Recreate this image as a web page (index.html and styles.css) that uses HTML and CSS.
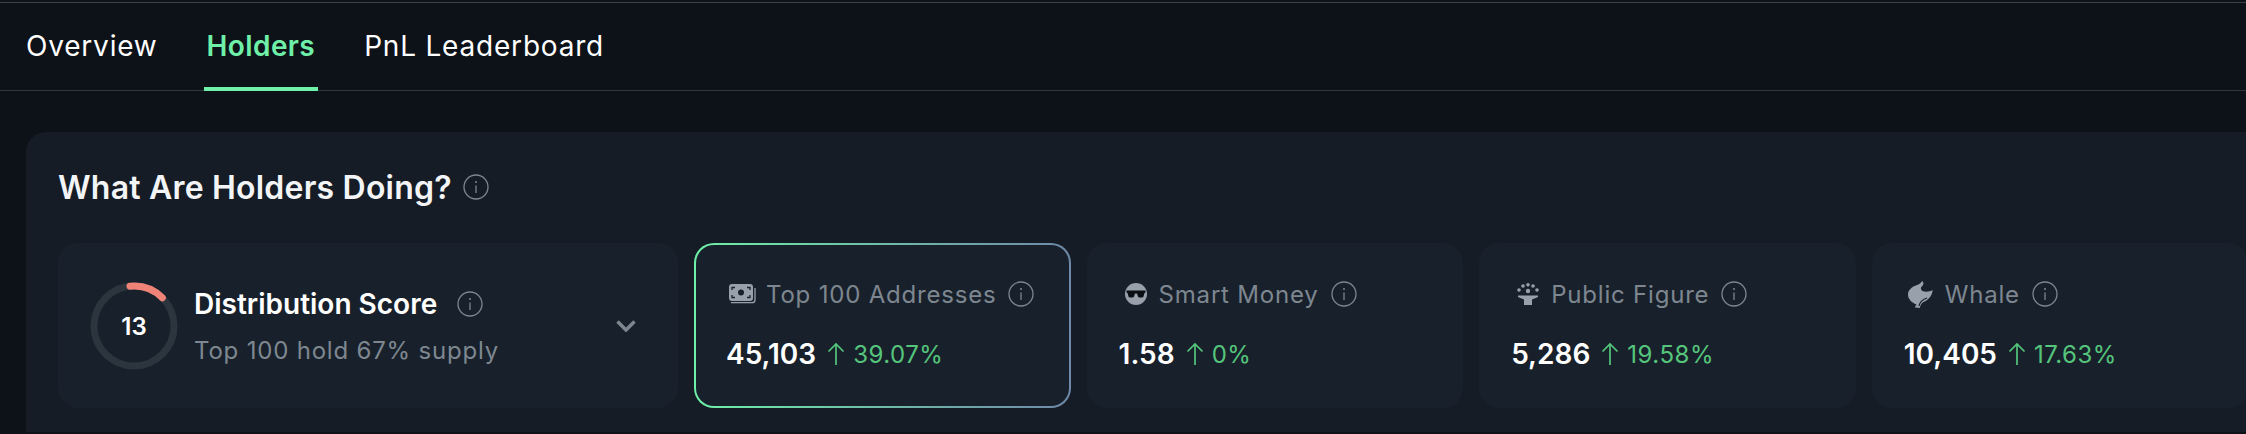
FILE: index.html
```html
<!DOCTYPE html>
<html lang="en">
<head>
  <meta charset="UTF-8">
  <title>Holders</title>
  <link rel="stylesheet" href="styles.css">
</head>
<body>
  <svg class="svg-defs" width="0" height="0">
    <symbol id="info" viewBox="0 0 26 26">
      <circle cx="13" cy="13" r="12" fill="none" stroke="currentColor" stroke-width="1.3"/>
      <path d="M13 11.5v7.5" stroke="currentColor" stroke-width="1.3" fill="none"/>
      <circle cx="13" cy="8" r="1" fill="currentColor"/>
    </symbol>
    <symbol id="up" viewBox="0 0 18 24">
      <path d="M9 23V2M1.5 9.5 9 2l7.500 7.500" fill="none" stroke="currentColor" stroke-width="1.7"/>
    </symbol>
  </svg>

  <nav class="tabs">
    <a class="tab">Overview</a>
    <a class="tab active">Holders</a>
    <a class="tab">PnL Leaderboard</a>
  </nav>

  <main class="panel">
    <h2 class="panel-title">What Are Holders Doing? <svg class="info"><use href="#info"/></svg></h2>

    <div class="cards">
      <div class="card score-card">
        <svg class="ring" viewBox="0 0 88 88">
          <circle cx="44" cy="44" r="40" fill="none" stroke="#2c343e" stroke-width="7"/>
          <path d="M40 4.2A40 40 0 0 1 72.3 15.7" fill="none" stroke="#f08378" stroke-width="7" stroke-linecap="round"/>
          <text x="44" y="53" text-anchor="middle" class="ring-num">13</text>
        </svg>
        <div class="score-text">
          <div class="score-title">Distribution Score <svg class="info"><use href="#info"/></svg></div>
          <div class="score-sub">Top 100 hold 67% supply</div>
        </div>
        <svg class="chevron" viewBox="0 0 20 12"><path d="M1.5 1.5 10 10l8.5-8.5" fill="none" stroke="currentColor" stroke-width="3.5"/></svg>
      </div>

      <div class="card stat selected">
        <div class="stat-head">
          <svg class="kind kind-money" viewBox="0 0 27 20">
            <path d="M3 0h18a3 3 0 0 1 3 3v11a3 3 0 0 1-3 3H3a3 3 0 0 1-3-3V3a3 3 0 0 1 3-3Z" fill="#98a1ab"/>
            <circle cx="12" cy="8.500" r="3" fill="#18212b"/>
            <path d="M3 6V3.500h3M21 6V3.500h-3M3 11v2.500h3M21 11v2.500h-3" fill="none" stroke="#18212b" stroke-width="1.300"/>
            <path d="M2 18.700h21a3 3 0 0 0 3-3V4" fill="none" stroke="#98a1ab" stroke-width="1.300"/>
          </svg>
          <span>Top 100 Addresses</span>
          <svg class="info"><use href="#info"/></svg>
        </div>
        <div class="stat-row">
          <b>45,103</b>
          <svg class="up"><use href="#up"/></svg>
          <span class="pct">39.07%</span>
        </div>
      </div>

      <div class="card stat">
        <div class="stat-head">
          <svg class="kind kind-smart" viewBox="0 0 22 22">
            <circle cx="11" cy="11" r="11" fill="#98a1ab"/>
            <path d="M1.500 7.500h19v2l-1 .5-1 3.500a1.500 1.500 0 0 1-1.500 1h-2.500a1.500 1.500 0 0 1-1.500-1L12 10.500h-2l-1 3a1.500 1.500 0 0 1-1.500 1H5a1.500 1.500 0 0 1-1.500-1L2.500 10l-1-.5Z" fill="#0b0f14"/>
          </svg>
          <span>Smart Money</span>
          <svg class="info"><use href="#info"/></svg>
        </div>
        <div class="stat-row">
          <b>1.58</b>
          <svg class="up"><use href="#up"/></svg>
          <span class="pct">0%</span>
        </div>
      </div>

      <div class="card stat">
        <div class="stat-head">
          <svg class="kind kind-figure" viewBox="0 0 22 22">
            <g fill="#98a1ab">
              <circle cx="11" cy="1.800" r="1.800"/>
              <circle cx="6" cy="3" r="1.800"/>
              <circle cx="16" cy="3" r="1.800"/>
              <circle cx="2" cy="7" r="1.800"/>
              <circle cx="20" cy="7" r="1.800"/>
              <circle cx="11" cy="8" r="2.200"/>
              <path d="M1 12.500h20v1.500l-6 2.500V22H7v-5.500L1 14Z"/>
            </g>
          </svg>
          <span>Public Figure</span>
          <svg class="info"><use href="#info"/></svg>
        </div>
        <div class="stat-row">
          <b>5,286</b>
          <svg class="up"><use href="#up"/></svg>
          <span class="pct">19.58%</span>
        </div>
      </div>

      <div class="card stat">
        <div class="stat-head">
          <svg class="kind kind-whale" viewBox="0 0 25 27">
            <path d="M14 0c1.500 1 1.800 2.500 1 4l-2 2.500c-.5 1.800.5 3.200 2.200 3.800 3 .8 6.500.3 9.500-1.300-.3 3.200-1.500 6-3.700 8.300-1.800 2-3.800 3.300-6 4-1.500 1-2.600 2.700-3.200 5.700-2-.5-3.600-.7-5-.5.5-1.300 1-2.200 1.800-3C3.500 21.500 0 18 0 13.500 0 9 4 5.500 9 4c2-.6 4-2 5-4Z" fill="#98a1ab"/>
            <path d="M11 25c.8-4 3.500-6.500 8-8" fill="none" stroke="#18212b" stroke-width="1.300"/>
          </svg>
          <span>Whale</span>
          <svg class="info"><use href="#info"/></svg>
        </div>
        <div class="stat-row">
          <b>10,405</b>
          <svg class="up"><use href="#up"/></svg>
          <span class="pct">17.63%</span>
        </div>
      </div>
    </div>
  </main>
</body>
</html>
```

FILE: styles.css
```css
* {
  margin: 0;
  padding: 0;
  box-sizing: border-box;
}

html, body {
  height: 100%;
  overflow: hidden;
}

body {
  background: #0d1118;
  padding-top: 2px;
  font-family: Inter, "Noto Sans", sans-serif;
  color: #fff;
}

.svg-defs {
  position: absolute;
}

.tabs {
  display: flex;
  gap: 45px;
  height: 89px;
  padding-left: 24px;
  border-top: 1px solid #39424e;
  border-bottom: 1px solid #2f3741;
}

.tab {
  height: 88px;
  padding: 0 2px;
  font-size: 28px;
  line-height: 86px;
  letter-spacing: 0.8px;
  color: #fff;
}

.tab.active {
  margin: 0 -1px;
  padding: 0 3px;
  color: #6ff0a8;
  font-weight: 600;
  letter-spacing: 0.4px;
  border-bottom: 4px solid #6ff0a8;
  border-radius: 4px 4px 0 0;
}

.panel {
  margin: 41px 0 0 26px;
  height: 300px;
  padding: 33px 0 0 32px;
  background: #151c25;
  border-radius: 20px 0 0 0;
}

.panel-title {
  display: flex;
  align-items: center;
  gap: 11px;
  height: 44px;
  font-size: 32px;
  font-weight: 600;
  letter-spacing: 0.2px;
  color: #f3f4f6;
}

.info {
  width: 26px;
  height: 26px;
  flex: none;
  color: #7d858e;
}

.cards {
  display: flex;
  gap: 16px;
  margin-top: 34px;
}

.card {
  flex: none;
  height: 165px;
  background: #18212b;
  border-radius: 20px;
}

.score-card {
  display: flex;
  align-items: center;
  width: 620px;
  padding-left: 32px;
}

.ring {
  width: 88px;
  height: 88px;
  flex: none;
}

.ring-num {
  font-size: 24px;
  font-weight: 600;
  fill: #fff;
}

.score-text {
  margin-left: 16px;
  padding-top: 2px;
  flex: 1;
}

.score-title {
  display: flex;
  align-items: center;
  gap: 20px;
  font-size: 28px;
  font-weight: 600;
  line-height: 34px;
}

.score-sub {
  margin-top: 15px;
  font-size: 24px;
  line-height: 30px;
  letter-spacing: 0.8px;
  color: #7e8790;
}

.chevron {
  width: 20px;
  height: 12px;
  flex: none;
  margin-right: 42px;
  color: #7d858e;
}

.stat {
  width: 376.6px;
  padding: 37px 0 0 32px;
}

.stat.selected {
  border: 2px solid transparent;
  padding: 35px 0 0 30px;
  background:
    linear-gradient(#18212b, #18212b) padding-box,
    linear-gradient(90deg, #6ff0a8, #6f88a8) border-box;
}

.stat-head {
  display: flex;
  align-items: center;
  gap: 12px;
  height: 28px;
  font-size: 24px;
  letter-spacing: 0.8px;
  white-space: nowrap;
  color: #7e8790;
}

.stat-head .info {
  margin-left: 0;
}

.kind {
  flex: none;
}

.kind-money {
  width: 27px;
  height: 20px;
  margin: 0 -2px 0 3px;
}

.kind-smart {
  width: 22px;
  height: 22px;
  margin-left: 6px;
}

.kind-figure {
  width: 22px;
  height: 22px;
  margin-left: 6px;
}

.kind-whale {
  width: 25px;
  height: 27px;
  margin-left: 4px;
}

.stat-row {
  display: flex;
  align-items: center;
  margin-top: 30px;
  height: 32px;
}

.stat-row b {
  font-size: 28px;
  font-weight: 600;
}

.up {
  width: 18px;
  height: 24px;
  margin: 0 8px 0 11px;
  color: #55c57c;
}

.pct {
  font-size: 24px;
  letter-spacing: 0.5px;
  color: #55c57c;
}
```
